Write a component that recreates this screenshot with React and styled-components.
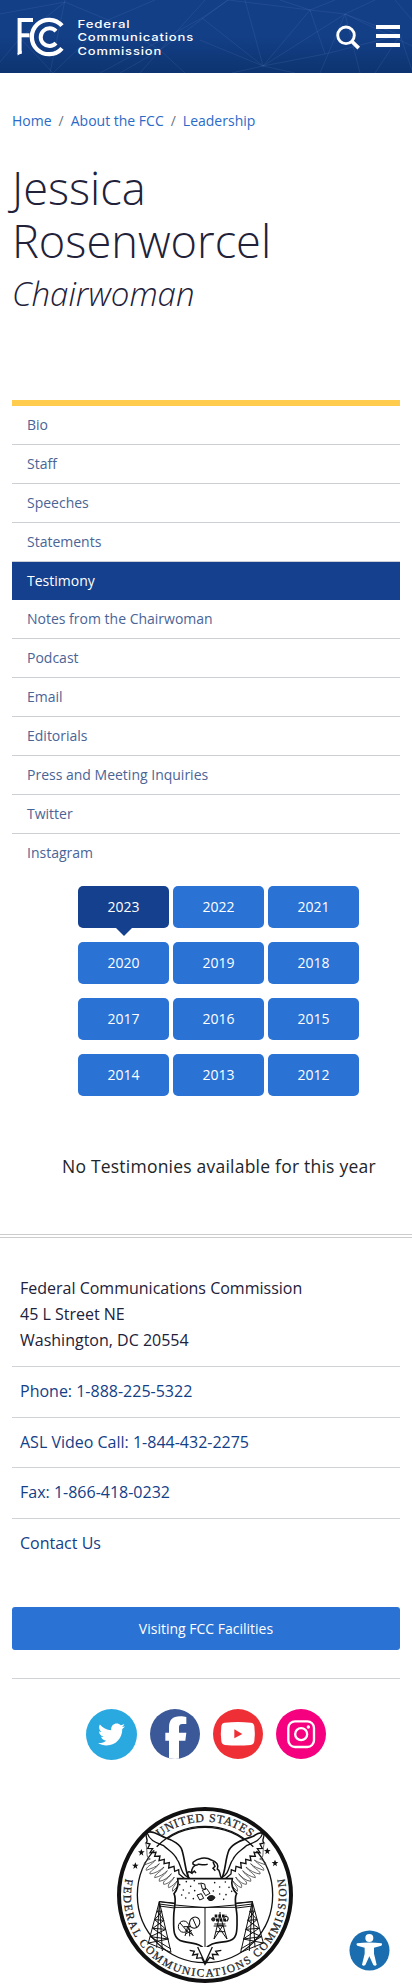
import React from "react";
import styled, { createGlobalStyle } from "styled-components";
import { FaTwitter } from "react-icons/fa";

const GlobalStyle = createGlobalStyle`
  *, *::before, *::after { box-sizing: border-box; }
  body {
    margin: 0;
    background: #fff;
    color: #212139;
    font-family: "Open Sans", "Noto Sans", sans-serif;
  }
  a { text-decoration: none; color: inherit; }
  ul { list-style: none; margin: 0; padding: 0; }
  svg { display: block; flex: none; }
`;

const Page = styled.div`
  width: 100%;
  height: 1986px;
  overflow: hidden;
`;

const Header = styled.header`
  position: relative;
  display: flex;
  align-items: flex-start;
  justify-content: space-between;
  height: 73px;
  padding: 0 12px 0 0;
  background: linear-gradient(#133f87 0%, #133f87 50%, #0d3470 100%);
`;

const Pattern = styled.svg`
  position: absolute;
  inset: 0;
`;

const LogoLink = styled.a`
  position: relative;
`;

const Tools = styled.div`
  position: relative;
  display: flex;
  gap: 15px;
  padding-top: 25px;
`;

const MenuButton = styled.button`
  display: flex;
  flex-direction: column;
  gap: 5px;
  width: 24px;
  padding: 0;
  border: 0;
  background: none;
`;

const MenuBar = styled.span`
  height: 4px;
  background: #fff;
`;

const Breadcrumb = styled.nav`
  display: flex;
  padding: 38px 12px 0;
  font-size: 14px;
  line-height: 20px;
  color: #6c757d;
  a { color: #2a6ac8; }
  span { padding: 0 7px; }
`;

const Title = styled.h1`
  margin: 30px 12px 0;
  font-size: 45.2px;
  font-weight: 300;
  line-height: 53px;
`;

const Subtitle = styled.p`
  margin: 8px 12px 0;
  font-size: 33px;
  font-style: italic;
  font-weight: 300;
  line-height: 38px;
`;

const SideNav = styled.ul`
  margin: 87px 12px 0;
  border-top: 6px solid #ffcc4d;
`;

const SideItem = styled.li`
  height: ${(p) => (p.$active ? 38 : 39)}px;
  padding-left: 15px;
  border-bottom: ${(p) => (p.$active || p.$last ? "0" : "1px solid #ccd0d4")};
  background: ${(p) => (p.$active ? "#15408d" : "transparent")};
  color: ${(p) => (p.$active ? "#fff" : "#4a6496")};
  font-size: 14px;
  line-height: 38px;
`;

const Years = styled.div`
  display: grid;
  grid-template-columns: repeat(3, 91px);
  gap: 14px 4px;
  margin: 13px 0 0 78px;
`;

const YearButton = styled.a`
  position: relative;
  height: 42px;
  border-radius: 5px;
  background: ${(p) => (p.$active ? "#15408d" : "#2a72d4")};
  color: #fff;
  font-size: 14px;
  line-height: 42px;
  text-align: center;
  &::after {
    content: "";
    display: ${(p) => (p.$active ? "block" : "none")};
    position: absolute;
    left: 38px;
    top: 100%;
    border: 8px solid transparent;
    border-top-color: #15408d;
    border-bottom: 0;
  }
`;

const Notice = styled.p`
  margin: 56px 0 0 62px;
  color: #212529;
  font-size: 17.5px;
  letter-spacing: 0.22px;
  line-height: 28px;
  white-space: nowrap;
`;

const Footer = styled.footer`
  margin-top: 54px;
  padding: 37px 12px 0;
  border-top: 4px double #ccc;
`;

const Address = styled.address`
  padding: 0 8px 13px;
  font-size: 16px;
  font-style: normal;
  line-height: 26px;
`;

const Contact = styled.li`
  height: 50.6px;
  padding: 12px 8px;
  border-top: 1px solid #d0d4d8;
  color: #134087;
  font-size: 16px;
  line-height: 25.6px;
`;

const VisitButton = styled.a`
  display: block;
  height: 43px;
  margin-top: 38.6px;
  border-radius: 3px;
  background: #2a72d4;
  color: #fff;
  font-size: 14px;
  line-height: 44px;
  text-align: center;
`;

const Social = styled.div`
  display: flex;
  align-items: center;
  gap: 13px;
  margin-top: 28px;
  padding: 30px 0 0 74px;
  border-top: 1px solid #d0d4d8;
`;

const Disc = styled.a`
  display: flex;
  align-items: center;
  justify-content: center;
  width: ${(p) => p.$size}px;
  height: ${(p) => p.$size}px;
  border-radius: 50%;
  overflow: hidden;
  background: ${(p) => p.$color};
  color: #fff;
`;

const SealRow = styled.div`
  display: flex;
  padding: 44px 0 0 103px;
`;

const AccessButton = styled.button`
  position: absolute;
  left: 349px;
  top: 1930px;
  padding: 0;
  border: 0;
  background: none;
`;

function Network() {
  return (
    <Pattern width="412" height="73" fill="none" stroke="#6f95d0" strokeOpacity=".15">
      <path d="M0 14L65 2L108 20L155 0M65 0L50 73M108 20L53 73L20 38L0 62M65 2L20 38M108 20L160 50L205 0M140 73L160 50L228 0M160 50L120 73M160 50L185 73M228 0L202 18L263 66L345 14L310 10L263 66L245 0M202 18L100 73M310 10L228 0M310 10L280 0M310 10L335 0M263 66L200 40M263 66L295 73M263 66L232 73M345 14L412 46M345 14L375 0M345 14L360 73M345 14L320 73M395 0L412 20M375 73L400 35L412 70M400 35L345 14M263 66L325 54L400 35M310 10L325 54" />
    </Pattern>
  );
}

function Logo() {
  return (
    <svg width="205" height="66" viewBox="0 0 205 66" fill="none">
      <g stroke="#fff" strokeWidth="4.3">
        <path d="M62 25.7A17.2 17.2 0 1 0 62 48.3" />
        <path d="M56 31.2A8.8 8.8 0 1 0 56 43.1" strokeWidth="4" />
        <path d="M33 20H19.6V54" strokeWidth="4" />
        <path d="M21 35.3H29.5" strokeWidth="4" />
      </g>
      <path d="M17.6 53L21.6 50.5V53L17.6 55.5Z" fill="#fff" />
      <g fill="#fff" fontFamily="Inter, Liberation Sans, sans-serif" fontSize="11" fontWeight="500" letterSpacing=".7">
        <text x="77.5" y="28" textLength="53" lengthAdjust="spacingAndGlyphs">Federal</text>
        <text x="77.5" y="41.3" textLength="116.500" lengthAdjust="spacingAndGlyphs">Communications</text>
        <text x="77.5" y="54.7" textLength="84.500" lengthAdjust="spacingAndGlyphs">Commission</text>
      </g>
    </svg>
  );
}

function SearchIcon() {
  return (
    <svg width="25" height="26" viewBox="0 0 25 26" fill="none" stroke="#fff">
      <circle cx="10" cy="10.300" r="8.3" strokeWidth="2.900" />
      <path d="M16 16.500L22.700 23.200" strokeWidth="3.800" />
    </svg>
  );
}

const STARS = [[125, 187], [107, 227], [503, 183], [526, 219]];
const DOTS = [[260, 275], [273, 289], [284, 272], [251, 300], [268, 309], [285, 302], [258, 324], [281, 326], [298, 281], [345, 278], [360, 291], [377, 276], [388, 292], [360, 312], [379, 314], [396, 304], [372, 328], [240, 284], [246, 315], [341, 303]];

function Tower({ x, flip }) {
  return (
    <g transform={`translate(${x} 335) scale(${flip ? -1 : 1} 1)`} strokeWidth="3">
      <path d="M0 0L-33 124M0 0L-8 138M0 0L35 152M0 0L9 148M-7 28L8 29M-14 54L14 56M-20 80L20 83M-27 105L27 112M-33 124L35 152M-7 28L14 56L-20 80L27 112L-33 124M8 29L-14 54L20 83L-27 105L35 142" />
    </g>
  );
}

function WingFeathers() {
  return (
    <g>
      <path d="M142 128C151 157 181 160 192 167C207 181 225 190 232 208C245 222 241 252 268 264" strokeWidth="4" />
      <path d="M142 128C132 139 150 149 139 159L151 162L144 175L159 176L151 188L169 187L165 199L181 198L178 212L194 208L193 221L209 218L207 234L223 229L225 244L237 239L238 252L257 268" strokeWidth="4" />
      <path d="M139 162C145 190 137 203 152 207C140 211 132 217 134 225C144 220 157 218 168 210C157 223 136 233 140 241C154 235 169 232 179 221C169 236 147 244 151 252C166 250 181 242 193 231C183 246 165 252 165 263C180 260 193 252 203 242C193 259 175 263 179 274C194 272 207 261 215 251C205 268 187 273 192 283C206 282 217 270 224 261C216 277 202 281 207 293C219 289 224 281 234 271C226 286 216 293 219 304L234 289" strokeWidth="2.500" stroke="#444" />
    </g>
  );
}

function Seal() {
  return (
    <svg width="182" height="182" viewBox="46 42 546 546" fill="none" stroke="#111">
      <defs>
        <path id="arcTop" d="M96 315A220 220 0 0 1 536 315" />
        <path id="arcBottom" d="M79 258A244 244 0 1 0 553 258" />
      </defs>
      <circle cx="316" cy="315" r="258" strokeWidth="12" fill="#fff" />
      <circle cx="316" cy="315" r="203" strokeWidth="4" />
      <path d="M141 129C155 117 183 139 199 144C219 150 244 165 247 181C256 210 258 250 268 265H366C378 245 376 208 388 180C402 156 438 147 461 139C475 128 487 127 493 132L480 170L430 240L366 267H257L178 212Z" fill="#fff" stroke="none" />
      <path d="M171 170A203 203 0 0 1 461 170" strokeWidth="4" />
      <path d="M141 129C155 117 183 139 199 144C219 150 244 165 247 181C256 210 258 250 268 265M366 265C378 245 376 208 388 180C402 156 438 147 461 139C475 128 487 127 493 132" strokeWidth="5" />
      <WingFeathers />
      <g transform="translate(632 0) scale(-1 1)"><WingFeathers /></g>
      <g fill="#222" stroke="#222" strokeWidth=".8" fontFamily="Liberation Serif, serif" fontSize="36">
        <text><textPath href="#arcTop" startOffset="50%" textAnchor="middle" textLength="294">UNITED STATES</textPath></text>
        <text fontSize="34"><textPath href="#arcBottom" startOffset="50%" textAnchor="middle" textLength="868">FEDERAL COMMUNICATIONS COMMISSION</textPath></text>
      </g>
      <g fill="#111" stroke="none">
        {STARS.map(([x, y]) => (
          <path key={x} transform={`translate(${x} ${y})`} d="M0-10L3-3L10-3L4 2L6 10L0 5L-6 10L-4 2L-10-3L-3-3Z" />
        ))}
      </g>
      <path d="M268 265C258 241 268 244 276 249C275 235 282 224 295 224C285 229 276 222 281 216C293 205 318 199 335 210C351 215 358 225 353 237C364 242 357 251 366 265M294 223C307 222 316 228 324 222M340 216L346 229L340 235L347 242M277 250L284 243L289 249" strokeWidth="4.5" />
      <Tower x={179} />
      <Tower x={458} flip />
      <path d="M179 335L314 353L458 335M179 342L314 360L458 342M179 335L302 346M458 335L330 346M179 348L316 366L458 348" strokeWidth="3" />
      <path d="M234 266H398C392 290 402 302 411 311C401 327 411 353 412 379C412 417 417 450 382 454C346 459 330 459 316 479C302 459 281 462 250 454C218 448 222 415 222 384C221 353 233 332 223 311C232 300 238 286 234 266Z" fill="#fff" strokeWidth="5" />
      <path d="M226 345L316 353L407 345M316 353V478M226 352H407" strokeWidth="3" />
      <g fill="#111" stroke="none">
        {DOTS.map(([x, y]) => <circle key={`${x}-${y}`} cx={x} cy={y} r="2.4" />)}
      </g>
      <g strokeWidth="3">
        <path d="M303 279L315 282L318 297L308 297ZM308 301L321 296L331 310L318 317ZM292 315L305 311L312 325L300 330Z" fill="#fff" />
        <path d="M323 324C326 335 342 334 346 322C340 315 330 314 323 324Z" fill="#222" />
        <ellipse cx="252" cy="410" rx="16" ry="17" />
        <ellipse cx="285" cy="398" rx="15" ry="17" transform="rotate(25 285 398)" />
        <path d="M241 399L262 423M279 385L291 412M252 410H274M264 410L256 438M264 410L281 438M259 431L277 421M257 421L277 433M270 416V439" />
        <path d="M361 374L343 447M361 374L382 447M353 406H370M349 425H376M343 447L370 406M382 447L353 406M361 366V376M344 402H377M342 408H380" />
        <path d="M345 378H380M349 390H384" strokeWidth="9" strokeDasharray="8 3" />
        <circle cx="341" cy="388" r="5" fill="#333" /><circle cx="379" cy="386" r="7" />
      </g>
      <path d="M270 481L284 484L279 495L294 492L291 505L306 503L316 523L330 502L342 507L338 493L355 494L348 484L365 481M294 471L316 519L338 471" fill="#fff" strokeWidth="4" />
    </svg>
  );
}

const NAV = ["Bio", "Staff", "Speeches", "Statements", "Testimony", "Notes from the Chairwoman", "Podcast", "Email", "Editorials", "Press and Meeting Inquiries", "Twitter", "Instagram"];
const YEARS = [2023, 2022, 2021, 2020, 2019, 2018, 2017, 2016, 2015, 2014, 2013, 2012];
const CONTACTS = ["Phone: 1-888-225-5322", "ASL Video Call: 1-844-432-2275", "Fax: 1-866-418-0232", "Contact Us"];

export default function App() {
  return (
    <Page>
      <GlobalStyle />
      <Header>
        <Network />
        <LogoLink href="#"><Logo /></LogoLink>
        <Tools>
          <SearchIcon />
          <MenuButton aria-label="Menu"><MenuBar /><MenuBar /><MenuBar /></MenuButton>
        </Tools>
      </Header>
      <Breadcrumb>
        <a href="#">Home</a><span>/</span><a href="#">About the FCC</a><span>/</span><a href="#">Leadership</a>
      </Breadcrumb>
      <Title>Jessica<br />Rosenworcel</Title>
      <Subtitle>Chairwoman</Subtitle>
      <SideNav>
        {NAV.map((name, i) => (
          <SideItem key={name} $active={name === "Testimony"} $last={i === NAV.length - 1}>
            <a href="#">{name}</a>
          </SideItem>
        ))}
      </SideNav>
      <Years>
        {YEARS.map((y) => <YearButton key={y} href="#" $active={y === 2023}>{y}</YearButton>)}
      </Years>
      <Notice>No Testimonies available for this year</Notice>
      <Footer>
        <Address>Federal Communications Commission<br />45 L Street NE<br />Washington, DC 20554</Address>
        <ul>
          {CONTACTS.map((c) => <Contact key={c}><a href="#">{c}</a></Contact>)}
        </ul>
        <VisitButton href="#">Visiting FCC Facilities</VisitButton>
        <Social>
          <Disc href="#" $size={51} $color="#29a9e0" aria-label="Twitter"><FaTwitter size={27} /></Disc>
          <Disc href="#" $size={50} $color="#3b5998" aria-label="Facebook">
            <svg width="50" height="50" viewBox="0 0 150 150" fill="#fff">
              <path d="M57 150V95H46V71H57V56C57 32 68 22 90 22C98 22 104 23 109 24V45H97C89 45 87 49 87 57V71H109L106 95H87V150Z" />
            </svg>
          </Disc>
          <Disc href="#" $size={50} $color="#ee3036" aria-label="YouTube">
            <svg width="50" height="50" viewBox="0 0 150 150" fill="#fff">
              <path d="M36 41Q75 37 113 41Q123 42 124 52Q127 74 124 96Q123 107 113 108Q75 111 36 108Q26 107 25 96Q22 74 25 52Q26 42 36 41Z" />
              <path d="M64 61V88L88 75Z" fill="#ee3036" />
            </svg>
          </Disc>
          <Disc href="#" $size={50} $color="#f5007e" aria-label="Instagram">
            <svg width="50" height="50" viewBox="0 0 150 150" fill="none" stroke="#fff" strokeWidth="7">
              <rect x="37" y="37" width="77" height="77" rx="20" />
              <circle cx="75.500" cy="75.500" r="18" />
              <circle cx="97" cy="54" r="5" fill="#fff" stroke="none" />
            </svg>
          </Disc>
        </Social>
        <SealRow><Seal /></SealRow>
      </Footer>
      <AccessButton aria-label="Accessibility">
        <svg width="41" height="41" viewBox="0 0 123 123" fill="#fff">
          <circle cx="61.500" cy="61.500" r="60" fill="#1a6eaf" />
          <circle cx="61" cy="24" r="12" />
          <path d="M24 40Q60 35 98 40Q101 44 97 47L75 53V71L83 104Q79 110 73 105L61 79L49 105Q43 110 39 104L47 71V53L25 47Q20 43 24 40Z" />
        </svg>
      </AccessButton>
    </Page>
  );
}
